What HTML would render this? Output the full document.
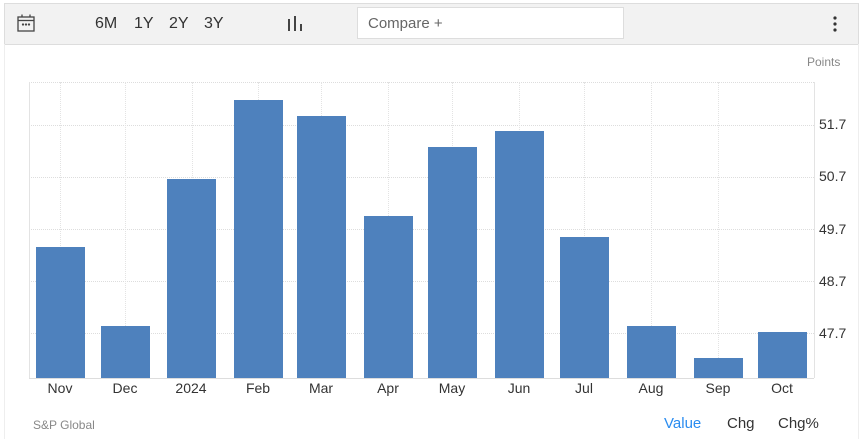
<!DOCTYPE html><html><head><style>
body{margin:0;width:859px;height:439px;background:#fff;font-family:"Liberation Sans",sans-serif;position:relative;overflow:hidden}
.tb{position:absolute;left:4px;top:3px;width:853px;height:40px;background:#f2f2f2;border:1px solid #ddd}
.t{position:absolute;font-size:16px;color:#333;top:15px}
.cmp{position:absolute;left:357px;top:7px;width:267px;height:32px;background:#fff;border:1px solid #ddd;box-sizing:border-box;font-size:15px;color:#666;padding:7px 10px}
.bar{position:absolute;background:#4e81bd;width:49px;bottom:61px}
.xl{position:absolute;top:380px;font-size:14px;color:#333;width:60px;text-align:center}
.yl{position:absolute;left:819px;font-size:14px;color:#333}
.g{position:absolute;left:29px;width:785px;border-top:1px dotted #ddd;height:0}
.v{position:absolute;top:82px;height:296px;border-left:1px dotted #e3e3e3;width:0}
</style></head><body>
<div class="tb"></div>
<svg style="position:absolute;left:17px;top:14px" width="18" height="18" viewBox="0 0 18 18" fill="none" stroke="#444" stroke-width="1.3"><rect x="1" y="3" width="16" height="14"/><line x1="1" y1="6.5" x2="17" y2="6.5"/><line x1="5" y1="0.5" x2="5" y2="3"/><line x1="13" y1="0.5" x2="13" y2="3"/><circle cx="6" cy="10.5" r=".5" fill="#444"/><circle cx="9" cy="10.5" r=".5" fill="#444"/><circle cx="12" cy="10.5" r=".5" fill="#444"/></svg>
<div class="t" style="left:95px">6M</div><div class="t" style="left:134px">1Y</div><div class="t" style="left:169px">2Y</div><div class="t" style="left:204px">3Y</div>
<svg style="position:absolute;left:287px;top:16px" width="16" height="16"><rect x="1" y="3" width="2" height="12" fill="#444"/><rect x="7" y="0" width="2" height="15" fill="#444"/><rect x="13" y="8" width="2" height="7" fill="#444"/></svg>
<div class="cmp">Compare +</div>
<svg style="position:absolute;left:832px;top:16px" width="6" height="16"><circle cx="3" cy="2" r="1.6" fill="#333"/><circle cx="3" cy="8" r="1.6" fill="#333"/><circle cx="3" cy="14" r="1.6" fill="#333"/></svg>
<div style="position:absolute;left:4px;top:44px;width:853px;height:395px;border-left:1px solid #eee;border-right:1px solid #eee"></div>
<div style="position:absolute;left:807px;top:55px;font-size:12px;color:#888">Points</div>
<div class="g" style="top:82px"></div><div class="g" style="top:125px"></div><div class="g" style="top:177px"></div><div class="g" style="top:229px"></div><div class="g" style="top:281px"></div><div class="g" style="top:333px"></div>
<div class="v" style="left:29px;border-left:1px solid #e3e3e3"></div><div class="v" style="left:60px"></div><div class="v" style="left:125px"></div><div class="v" style="left:192px"></div><div class="v" style="left:258px"></div><div class="v" style="left:321px"></div><div class="v" style="left:388px"></div><div class="v" style="left:452px"></div><div class="v" style="left:519px"></div><div class="v" style="left:584px"></div><div class="v" style="left:651px"></div><div class="v" style="left:718px"></div><div class="v" style="left:814px;border-left:1px solid #e3e3e3"></div>
<div style="position:absolute;left:29px;top:378px;width:785px;border-top:1px solid #ddd"></div>
<div class="bar" style="left:36px;top:247px"></div>
<div class="bar" style="left:101px;top:326px"></div>
<div class="bar" style="left:167px;top:179px"></div>
<div class="bar" style="left:234px;top:100px"></div>
<div class="bar" style="left:297px;top:116px"></div>
<div class="bar" style="left:364px;top:216px"></div>
<div class="bar" style="left:428px;top:147px"></div>
<div class="bar" style="left:495px;top:131px"></div>
<div class="bar" style="left:560px;top:237px"></div>
<div class="bar" style="left:627px;top:326px"></div>
<div class="bar" style="left:694px;top:358px"></div>
<div class="bar" style="left:758px;top:332px"></div>
<div class="xl" style="left:30px">Nov</div><div class="xl" style="left:95px">Dec</div><div class="xl" style="left:161px">2024</div><div class="xl" style="left:228px">Feb</div><div class="xl" style="left:291px">Mar</div><div class="xl" style="left:358px">Apr</div><div class="xl" style="left:422px">May</div><div class="xl" style="left:489px">Jun</div><div class="xl" style="left:554px">Jul</div><div class="xl" style="left:621px">Aug</div><div class="xl" style="left:688px">Sep</div><div class="xl" style="left:752px">Oct</div>
<div class="yl" style="top:116px">51.7</div><div class="yl" style="top:168px">50.7</div><div class="yl" style="top:221px">49.7</div><div class="yl" style="top:273px">48.7</div><div class="yl" style="top:325px">47.7</div>
<div style="position:absolute;left:33px;top:418px;font-size:12px;color:#888">S&amp;P Global</div>
<div style="position:absolute;left:664px;top:415px;font-size:15px;color:#2a8cf0">Value</div>
<div style="position:absolute;left:727px;top:415px;font-size:15px;color:#333">Chg</div>
<div style="position:absolute;left:778px;top:415px;font-size:15px;color:#333">Chg%</div>
</body></html>
